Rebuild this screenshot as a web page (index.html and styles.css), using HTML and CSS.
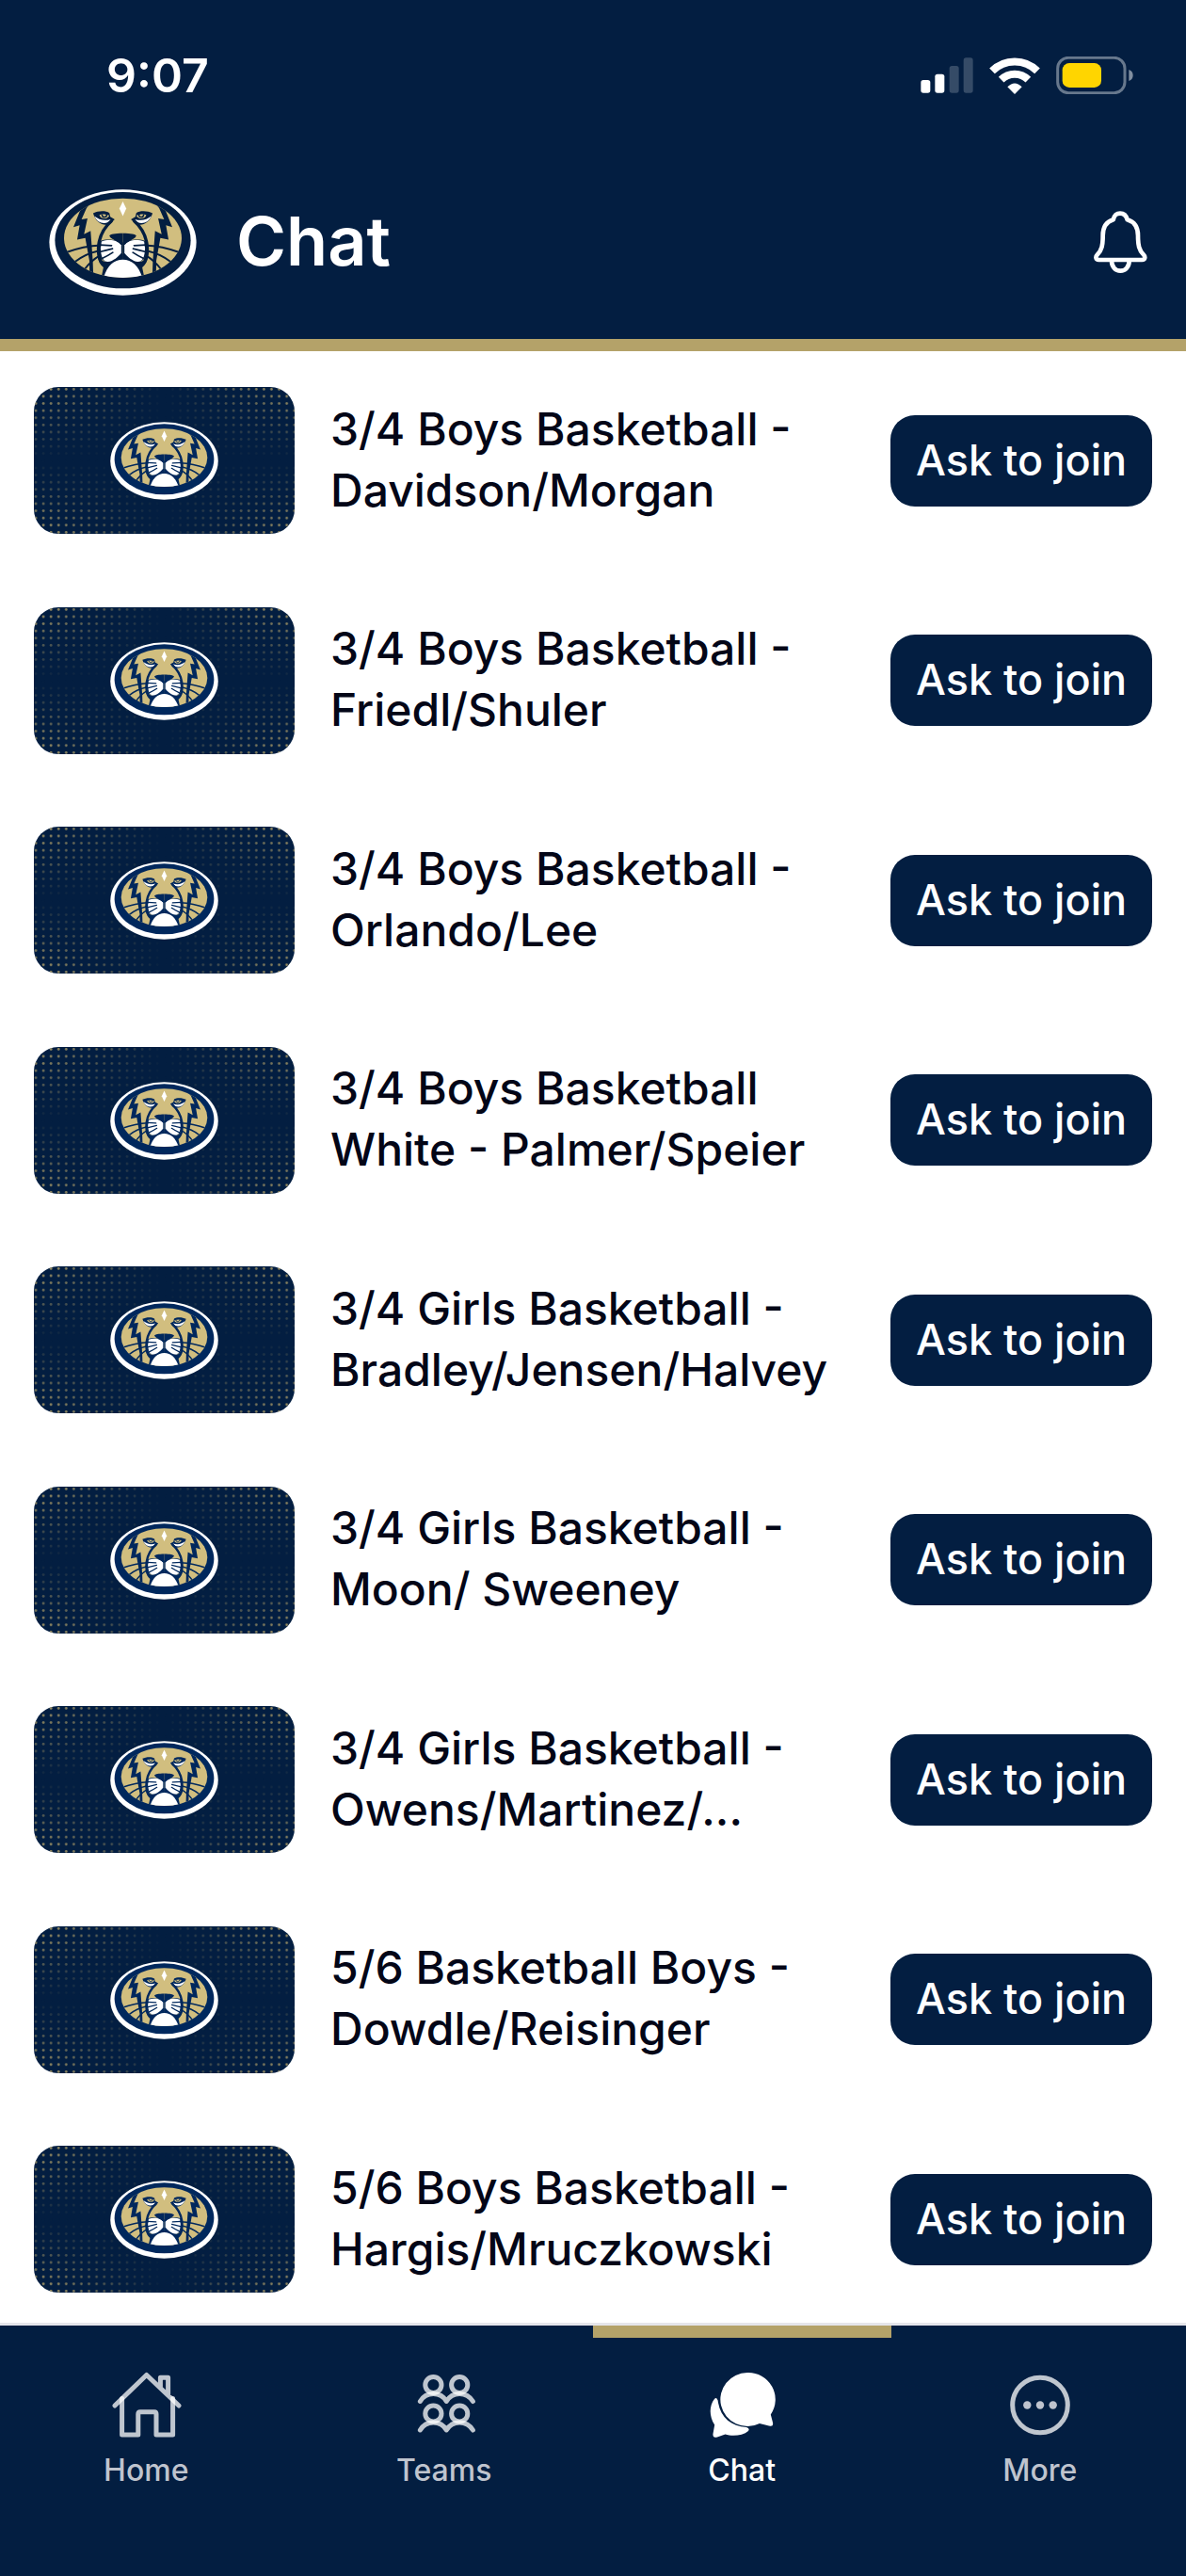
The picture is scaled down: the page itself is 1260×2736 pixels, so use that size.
FILE: index.html
```html
<!DOCTYPE html>
<html lang="en">
<head>
    <meta charset="UTF-8">
    <meta name="viewport" content="width=device-width, initial-scale=1.0">
    <title>Chat</title>
    <link rel="stylesheet" href="styles.css">
</head>
<body>
    <!-- Shared drawings -->
    <svg class="defs" aria-hidden="true">
        <defs>
            <clipPath id="face-clip"><ellipse cx="300" cy="218" rx="188" ry="127"/></clipPath>
            <g id="face-half">
                <!-- mane -->
                <path fill="currentColor" d="M163 131L190 90L198 106L184 122L168 158L187 155L176 206L197 195L204 290L206 350L194 350L193 290L180 218L154 223L162 177L142 183Z"/>
                <!-- eye -->
                <path fill="currentColor" d="M205 139C222 130 246 130 257 138L260 150L274 158L262 170C246 182 216 176 205 139Z"/>
                <path fill="#fff" d="M209 148C224 160 240 164 262 158C252 176 221 176 209 148Z"/>
                <path fill="#d1be7f" d="M225 144C229 159 251 159 257 146C244 141 234 140 225 144Z"/>
                <path fill="none" stroke="currentColor" stroke-width="4" d="M233 142C234 154 248 154 249 143"/>
                <!-- cheek line -->
                <path fill="none" stroke="currentColor" stroke-width="10" d="M265 162C240 184 227 208 223 238C220 262 222 284 234 298"/>
                <path fill="currentColor" d="M221 270C224 288 240 298 262 292C280 288 292 278 300 268V300C270 300 250 320 240 345L228 360L238 312C226 302 218 288 221 270Z"/>
                <!-- muzzle -->
                <path fill="currentColor" d="M225 229C245 220 268 222 300 232V294H250C220 290 222 250 225 229Z"/>
                <path fill="#fff" d="M232 229C254 221 286 224 295 241V266C285 278 270 292 252 294C236 293 230 277 229 250Z"/>
                <path fill="none" stroke="currentColor" stroke-width="5" stroke-linecap="round" d="M226 240L264 242M226 262Q246 258 267 252M232 284Q250 276 268 264"/>
                <!-- whiskers -->
                <path fill="none" stroke="currentColor" stroke-width="6" d="M230 241Q175 243 115 265M222 259Q180 268 145 295M224 275Q198 290 176 320"/>
                <!-- nose -->
                <path fill="currentColor" d="M300 203C275 203 260 206 257 211C262 223 286 228 292 238L300 240Z"/>
            </g>
            <symbol id="logo" viewBox="64 62 472 340">
                <ellipse cx="300" cy="232" rx="235" ry="169" fill="#fff"/>
                <ellipse cx="300" cy="225" rx="217" ry="154" fill="currentColor"/>
                <g clip-path="url(#face-clip)">
                    <rect x="100" y="80" width="400" height="280" fill="#d1be7f"/>
                    <use href="#face-half"/>
                    <use href="#face-half" transform="matrix(-1 0 0 1 600 0)"/>
                    <path fill="#fff" d="M237 350C248 308 270 287 300 287S352 308 364 350Z"/>
                    <path fill="#fff" d="M300 101L311 124L300 148L289 124Z"/>
                </g>
            </symbol>

            <pattern id="dots" width="8.08" height="7.6" patternUnits="userSpaceOnUse">
                <circle cx="2" cy="2.4" r="1.4" fill="#b4a269"/>
            </pattern>
            <linearGradient id="fade-x">
                <stop offset="0" stop-color="#fff"/>
                <stop offset="0.25" stop-color="#888"/>
                <stop offset="0.5" stop-color="#000"/>
                <stop offset="0.75" stop-color="#888"/>
                <stop offset="1" stop-color="#fff"/>
            </linearGradient>
            <linearGradient id="fade-y" x2="0" y2="1">
                <stop offset="0" stop-color="#000" stop-opacity="0"/>
                <stop offset="0.5" stop-color="#000"/>
                <stop offset="1" stop-color="#000" stop-opacity="0"/>
            </linearGradient>
            <mask id="corners">
                <rect width="277" height="156" fill="url(#fade-x)"/>
                <rect width="277" height="156" fill="url(#fade-y)"/>
            </mask>
            <symbol id="banner" viewBox="0 0 277 156">
                <rect width="277" height="156" fill="#031e41"/>
                <rect width="277" height="156" fill="url(#dots)" mask="url(#corners)"/>
                <use href="#logo" x="81" y="37" width="115" height="83"/>
            </symbol>
        </defs>
    </svg>

    <header class="header">
        <div class="status-bar">
            <span class="time">9:07</span>
            <div class="status-icons">
                <svg width="56" height="38" viewBox="113 93 168 114" fill="#fff">
                    <rect x="114" y="165" width="30" height="41" rx="8"/>
                    <rect x="159" y="146" width="30" height="60" rx="8"/>
                    <rect x="205" y="120" width="30" height="86" rx="8" opacity="0.2"/>
                    <rect x="250" y="94" width="30" height="112" rx="8" opacity="0.2"/>
                </svg>
                <svg width="54" height="41" viewBox="332 86 162 123" fill="none" stroke="#fff" stroke-width="24">
                    <path d="M341 132A102 102 0 0 1 485 132"/>
                    <path d="M370 160A61 61 0 0 1 456 160"/>
                    <path d="M390 183Q413 160 436 183L413 206Z" fill="#fff" stroke="none"/>
                </svg>
                <svg width="82" height="40" viewBox="545 90 246 120">
                    <rect x="550" y="94" width="214" height="112" rx="34" fill="none" stroke="#fff" stroke-opacity="0.4" stroke-width="9"/>
                    <rect x="565" y="111" width="124" height="78" rx="22" fill="#ffd500"/>
                    <path d="M777 132Q790 137 790 150T777 168Z" fill="#fff" opacity="0.5"/>
                </svg>
            </div>
        </div>
        <div class="title-bar">
            <svg class="header-logo" role="img" aria-label="Team logo"><use href="#logo"/></svg>
            <h1>Chat</h1>
            <button class="bell" aria-label="Notifications">
                <svg width="60" height="68" viewBox="118 70 180 204" fill="none" stroke="#fff" stroke-width="14" stroke-linejoin="round">
                    <path d="M140 229H278C288 229 289 219 283 213C268 198 265 182 265 152C265 124 254 108 231 101C227 86 220 81 208 81S190 86 186 101C163 108 153 124 153 152C153 182 150 198 135 213C129 219 130 229 140 229Z"/>
                    <path d="M181 226V232C181 251 193 264 209 264S237 251 237 232V226"/>
                </svg>
            </button>
        </div>
    </header>

    <main class="chat-list">
        <div class="chat-row">
            <svg class="thumb" aria-hidden="true"><use href="#banner"/></svg>
            <span class="name">3/4 Boys Basketball - Davidson/Morgan</span>
            <button class="join-btn">Ask to join</button>
        </div>
        <div class="chat-row">
            <svg class="thumb" aria-hidden="true"><use href="#banner"/></svg>
            <span class="name">3/4 Boys Basketball - Friedl/Shuler</span>
            <button class="join-btn">Ask to join</button>
        </div>
        <div class="chat-row">
            <svg class="thumb" aria-hidden="true"><use href="#banner"/></svg>
            <span class="name">3/4 Boys Basketball - Orlando/Lee</span>
            <button class="join-btn">Ask to join</button>
        </div>
        <div class="chat-row">
            <svg class="thumb" aria-hidden="true"><use href="#banner"/></svg>
            <span class="name">3/4 Boys Basketball White - Palmer/Speier</span>
            <button class="join-btn">Ask to join</button>
        </div>
        <div class="chat-row">
            <svg class="thumb" aria-hidden="true"><use href="#banner"/></svg>
            <span class="name">3/4 Girls Basketball - Bradley/Jensen/Halvey</span>
            <button class="join-btn">Ask to join</button>
        </div>
        <div class="chat-row">
            <svg class="thumb" aria-hidden="true"><use href="#banner"/></svg>
            <span class="name">3/4 Girls Basketball - Moon/ Sweeney</span>
            <button class="join-btn">Ask to join</button>
        </div>
        <div class="chat-row">
            <svg class="thumb" aria-hidden="true"><use href="#banner"/></svg>
            <span class="name">3/4 Girls Basketball - Owens/Martinez/...</span>
            <button class="join-btn">Ask to join</button>
        </div>
        <div class="chat-row">
            <svg class="thumb" aria-hidden="true"><use href="#banner"/></svg>
            <span class="name">5/6 Basketball Boys - Dowdle/Reisinger</span>
            <button class="join-btn">Ask to join</button>
        </div>
        <div class="chat-row">
            <svg class="thumb" aria-hidden="true"><use href="#banner"/></svg>
            <span class="name">5/6 Boys Basketball - Hargis/Mruczkowski</span>
            <button class="join-btn">Ask to join</button>
        </div>
    </main>

    <nav class="tab-bar">
        <a class="tab" href="#home">
            <svg class="tab-icon" viewBox="-1 0 76 74">
                <path d="M4 37L37.7 4.5L72 37M52.4 18V7.3H60.6V26"/>
                <path d="M11.6 29.5V68H28.8V46Q28.8 43.7 31 43.7H46Q48 43.7 48 46V68H65.6V29.5"/>
            </svg>
            <span>Home</span>
        </a>
        <a class="tab" href="#teams">
            <svg class="tab-icon" viewBox="-6 0 76 74">
                <circle cx="20.4" cy="15" r="8.6"/>
                <circle cx="48.2" cy="15" r="8.6"/>
                <circle cx="20.4" cy="45.5" r="8.6"/>
                <circle cx="48.2" cy="45.5" r="8.6"/>
                <path d="M6.4 32.5Q11 24.5 20.4 24.5T34.3 32.5Q39 24.5 48.2 24.5T62.4 32.5"/>
                <path d="M6.4 63Q11 55 20.4 55T34.3 63Q39 55 48.2 55T62.4 63"/>
            </svg>
            <span>Teams</span>
        </a>
        <a class="tab active" href="#chat" aria-current="page">
            <svg class="tab-icon" viewBox="-2 0 76 74">
                <path d="M42 2A28.8 28.5 0 0 1 66.8 46.5L69 55Q70 60 65 58.5L55 56A28.8 28.5 0 1 1 42 2Z"/>
                <path d="M9.5 29.5Q11 31 11 34C14 50 25 59 41 60Q45 61 43 64C37 69 26 70 18.5 67.5L10 70.5Q5 72 5.5 67L7.2 57.5C1 48 1.5 37 7 30Q8.5 28.5 9.5 29.5Z"/>
            </svg>
            <span>Chat</span>
        </a>
        <a class="tab" href="#more">
            <svg class="tab-icon" viewBox="0 0 76 74">
                <circle cx="38" cy="36.5" r="29.3"/>
                <g class="more-dots">
                    <circle cx="24.3" cy="36.5" r="4.2"/>
                    <circle cx="38" cy="36.5" r="4.2"/>
                    <circle cx="51.7" cy="36.5" r="4.2"/>
                </g>
            </svg>
            <span>More</span>
        </a>
    </nav>
</body>
</html>
```

FILE: styles.css
```css
* {
    box-sizing: border-box;
}
body {
    margin: 0;
    min-height: 100vh;
    display: flex;
    flex-direction: column;
    font-family: Inter, "Liberation Sans", sans-serif;
    font-weight: 500;
    background-color: #fff;
    color: #030617;
    overflow-x: hidden;
}
button {
    border: none;
    font: inherit;
    cursor: pointer;
}
.defs {
    position: absolute;
    width: 0;
    height: 0;
}

/* Header */
.header {
    background-color: #031e41;
    color: #fff;
    border-bottom: 13px solid #b4a269;
}
.status-bar {
    display: flex;
    justify-content: space-between;
    align-items: center;
    height: 154px;
    padding: 6px 56px 0 113px;
}
.time {
    font-size: 50px;
    font-weight: 600;
}
.status-icons {
    display: flex;
    align-items: center;
    gap: 17px;
}
.title-bar {
    display: flex;
    align-items: center;
    height: 206px;
    padding: 0 40px 0 52px;
}
.header-logo {
    width: 157px;
    height: 113px;
    color: #031e41;
}
.title-bar h1 {
    flex: 1;
    margin: 0 0 0 42px;
    padding-bottom: 4px;
    font-size: 72px;
    font-weight: 600;
}
.bell {
    display: flex;
    padding: 0;
    background: none;
}

/* Chat list */
.chat-list {
    flex: 1;
    display: flex;
    flex-direction: column;
    justify-content: space-between;
    gap: 40px;
    padding: 38px 36px 32px;
}
.chat-row {
    display: flex;
    align-items: center;
}
.thumb {
    flex-shrink: 0;
    width: 277px;
    height: 156px;
    border-radius: 26px;
    color: #00285d;
}
.name {
    flex: 1;
    padding: 0 24px 3px 38px;
    font-size: 48px;
    line-height: 65px;
}
.join-btn {
    flex-shrink: 0;
    width: 278px;
    height: 97px;
    padding: 0 0 2px;
    border-radius: 26px;
    background-color: #031e41;
    color: #fff;
    font-size: 45px;
}

/* Bottom tabs */
.tab-bar {
    display: flex;
    height: 269px;
    margin: 0 -3px;
    border-top: 3px solid #e5e5ea;
    background-color: #031e41;
}
.tab {
    flex: 1;
    display: flex;
    flex-direction: column;
    align-items: center;
    gap: 12px;
    padding-top: 48px;
    position: relative;
    color: #bfc4ce;
    font-size: 32px;
    line-height: 40px;
    text-decoration: none;
}
.tab-icon {
    width: 76px;
    height: 74px;
    fill: none;
    stroke: rgba(255, 255, 255, 0.75);
    stroke-width: 5;
    stroke-linecap: round;
    stroke-linejoin: round;
}
.more-dots {
    fill: #bfc4ce;
    stroke: none;
}
.tab.active {
    color: #fff;
}
.tab.active .tab-icon {
    fill: #fff;
    stroke: none;
}
.tab.active::before {
    content: "";
    position: absolute;
    top: 0;
    left: 0;
    width: 100%;
    height: 13px;
    background-color: #b4a269;
}
```
